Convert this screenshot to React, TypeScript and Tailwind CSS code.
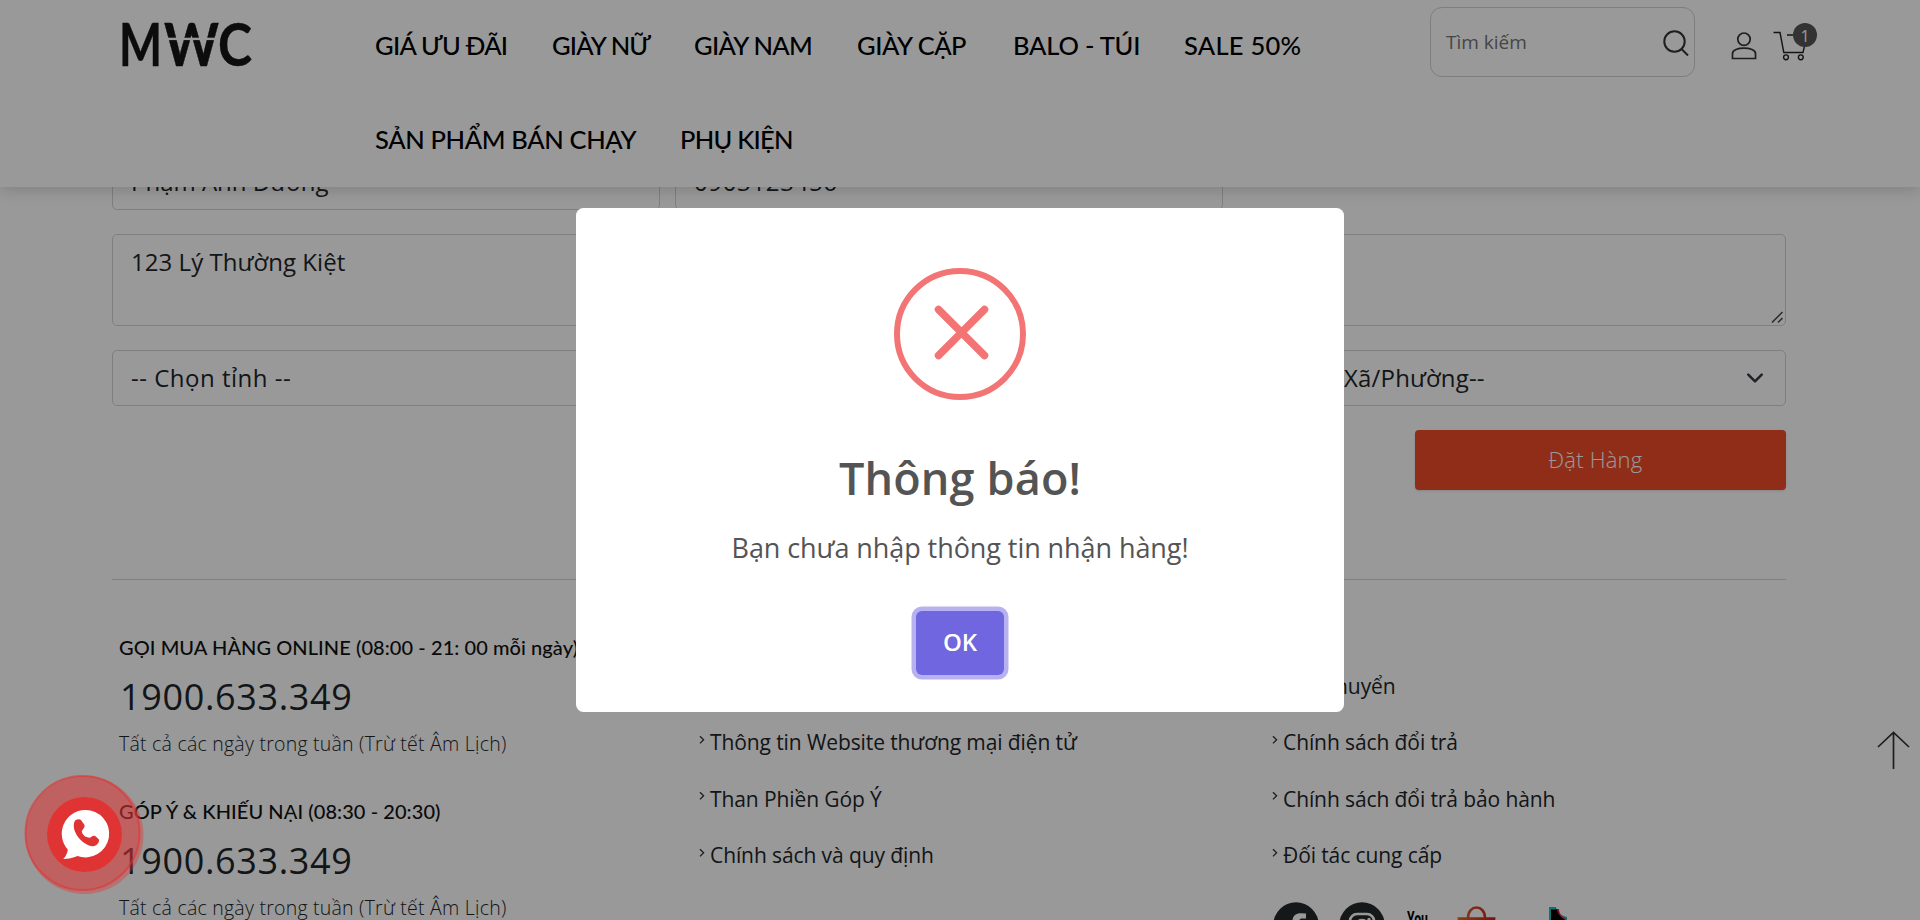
import { ReactNode } from "react";

const lato = "font-['Lato','Open_Sans',sans-serif]";

function NavItem({ children, width, track = "tracking-[-0.7px]" }: { children: ReactNode; width: string; track?: string }) {
  return (
    <a className={`block h-[94px] leading-[90px] whitespace-nowrap text-[25.5px] font-medium text-black ${lato} ${width} ${track}`}>
      {children}
    </a>
  );
}

function Header() {
  return (
    <header className="relative z-10 flex h-[187px] shrink-0 bg-white shadow-[0_4px_14px_rgba(0,0,0,0.15)]">
      <Logo />
      <nav className="ml-[123px] w-[961px]">
        <div className="flex">
          <NavItem width="w-[177px]">GIÁ ƯU ĐÃI</NavItem>
          <NavItem width="w-[142px]" track="tracking-[-0.85px]">GIÀY NỮ</NavItem>
          <NavItem width="w-[163px]">GIÀY NAM</NavItem>
          <NavItem width="w-[156px]" track="tracking-[-0.45px]">GIÀY CẶP</NavItem>
          <NavItem width="w-[171px]" track="tracking-[-0.2px]">BALO - TÚI</NavItem>
          <NavItem width="w-[140px]" track="tracking-[0.25px]">SALE 50%</NavItem>
        </div>
        <div className="flex">
          <NavItem width="w-[305px]" track="tracking-[-0.35px]">SẢN PHẨM BÁN CHẠY</NavItem>
          <NavItem width="w-[140px]" track="tracking-[-0.75px]">PHỤ KIỆN</NavItem>
        </div>
      </nav>
      <div className="ml-[94px] mt-[7px] flex h-[70px] w-[265px] items-center justify-between rounded-xl border border-[#d2d2d2] pl-[15px] pr-[5px]">
        <span className="text-[19px] text-[#757575]">Tìm kiếm</span>
        <svg width="26" height="27" viewBox="0 0 26 27" fill="none" stroke="#333" strokeWidth="2" className="mt-0.5">
          <circle cx="11.5" cy="11.5" r="10.2" />
          <path d="M18.5 19 L25 25.5" />
        </svg>
      </div>
      <svg className="ml-[36px] mt-[32px]" width="26" height="28" viewBox="0 0 26 28" fill="none" stroke="#333" strokeWidth="1.7">
        <circle cx="13" cy="7.2" r="6.2" />
        <path d="M1.5 26.5 V21.5 C1.5 18 7 16.2 13 16.2 S24.5 18 24.5 21.5 V26.5 Z" />
      </svg>
      <div className="relative ml-4 mt-[30px] h-8 w-9">
        <svg width="36" height="32" viewBox="0 0 36 32" fill="none" stroke="#222" strokeWidth="1.4">
          <path d="M0.5 2.5 H7 L10.8 22.5 H30 L34 5 H14" />
          <circle cx="13" cy="27.3" r="2.4" />
          <circle cx="27.8" cy="27.3" r="2.4" />
        </svg>
        <span className="absolute -top-[7px] left-[20px] flex size-6 items-center justify-center rounded-full bg-[#555] pt-px text-[16px] font-medium text-white">1</span>
      </div>
    </header>
  );
}

function Logo() {
  return (
    <div className="ml-[120px] mt-[14px] h-[60px] w-[132px]">
      <svg className="overflow-visible" width="132" height="60" viewBox="0 0 132 60" role="img" fontFamily="Lato, 'Open Sans', sans-serif" fontWeight="700" fontSize="59" fill="#161416" stroke="#161416" strokeWidth="0.4">
        <text x="-1" y="51.5" textLength="43" lengthAdjust="spacingAndGlyphs">M</text>
        <text x="44" y="51.5" textLength="55" lengthAdjust="spacingAndGlyphs">W</text>
        <text x="98" y="51.5" textLength="34" lengthAdjust="spacingAndGlyphs">C</text>
        <rect x="44" y="23.7" width="54" height="2.4" fill="#fff" stroke="none" />
      </svg>
    </div>
  );
}

const field = "rounded-[5px] border border-[#d3d4d8] px-[18px] text-[24px] text-[#212529]";

function Chevron() {
  return (
    <svg width="18" height="18" viewBox="0 0 16 16" fill="none" stroke="#343a40" strokeWidth="2.2" strokeLinecap="round" strokeLinejoin="round">
      <path d="m2 5 6 6 6-6" />
    </svg>
  );
}

function OrderForm() {
  return (
    <section className="-mt-[33px] ml-[112px] flex w-[1674px] flex-col">
      <div className="flex gap-[15px]">
        <div className={`h-14 w-[548px] leading-[54px] ${field}`}>Phạm Ánh Dương</div>
        <div className={`h-14 w-[548px] leading-[54px] tracking-[0.65px] ${field}`}>0903123456</div>
      </div>
      <div className={`relative mt-6 h-[92px] pt-[9px] leading-9 tracking-[0.05px] ${field}`}>
        123 Lý Thường Kiệt
        <svg className="absolute bottom-0.5 right-0.5" width="12" height="12" viewBox="0 0 12 12" stroke="#444" strokeWidth="1.5">
          <path d="M1 11.5 L11.5 1 M7 11.5 L11.5 7" />
        </svg>
      </div>
      <div className="mt-6 flex gap-[15px]">
        <div className={`flex h-14 w-[548px] items-center justify-between tracking-[0.5px] ${field}`}>
          -- Chọn tỉnh -- <Chevron />
        </div>
        <div className={`flex h-14 w-[548px] items-center justify-between ${field}`}>
          --Chọn Quận/Huyện-- <Chevron />
        </div>
        <div className={`flex h-14 w-[548px] items-center justify-between ${field}`}>
          <span className="-ml-px tracking-[0.15px] whitespace-nowrap">-- Chọn Xã/Phường--</span>
          <div className="pr-[3px]"><Chevron /></div>
        </div>
      </div>
      <button className="mt-6 h-[60px] w-[371px] self-end rounded-[4px] bg-[#ee4b2b] pb-0.5 pr-2.5 text-[22px] font-light text-white shadow-sm tracking-[0.2px]">
        Đặt Hàng
      </button>
    </section>
  );
}

function Contact({ title }: { title: string }) {
  return (
    <div className="h-[164px] whitespace-nowrap">
      <h4 className={`h-[34px] text-[20px] font-medium leading-[32px] tracking-[0.07px] text-[#111] ${lato}`}>{title}</h4>
      <p className="mt-[6px] h-[50px] pl-px text-[36px] leading-[52px] text-[#212529] tracking-[0.65px]">1900.633.349</p>
      <p className="mt-[8px] h-[30px] text-[19.5px] font-light leading-[30px] text-[#212529] tracking-[0.23px]">
        Tất cả các ngày trong tuần (Trừ tết Âm Lịch)
      </p>
    </div>
  );
}

function Links({ items, className }: { items: string[]; className: string }) {
  return (
    <ul className={className}>
      {items.map((t) => (
        <li key={t} className="flex h-[56.5px] items-center gap-[5px] whitespace-nowrap text-[21px] tracking-[-0.1px] text-[#212529]">
          <svg className="mb-1.5" width="6" height="10" viewBox="0 0 6 10" fill="none" stroke="#333" strokeWidth="1.3">
            <path d="m1 1.2 3.6 3.6 L1 8.4" />
          </svg>
          {t}
        </li>
      ))}
    </ul>
  );
}

function Social() {
  return (
    <div className="ml-px flex h-[46px] items-start">
      <svg className="mr-[20px]" width="46" height="46" viewBox="0 0 46 46">
        <circle cx="23" cy="23" r="22.7" fill="#22292b" />
        <path d="M33 11.5 V16.5 H29.5 C26.5 16.5 26 18 26 20 V23.5 H33 L32 30 H26 V46 H19.5 V30 H14 V23.5 H19.5 V19 C19.5 14 22.5 11.2 28 11.2 Z" fill="#fff" />
      </svg>
      <svg className="mr-[22px]" width="46" height="46" viewBox="0 0 46 46">
        <circle cx="23" cy="23" r="22.7" fill="#22292b" />
        <rect x="11" y="12" width="24" height="24" rx="7" fill="none" stroke="#fff" strokeWidth="2.6" />
        <circle cx="23" cy="24" r="6" fill="none" stroke="#fff" strokeWidth="2.6" />
        <circle cx="30" cy="17.5" r="1.7" fill="#fff" />
      </svg>
      <svg className="mr-[28px]" width="22" height="30" viewBox="0 0 22 30">
        <text x="0" y="23.5" fontFamily="Roboto, sans-serif" fontWeight="700" fontSize="20" textLength="21" lengthAdjust="spacingAndGlyphs" fill="#000">You</text>
      </svg>
      <svg className="mr-[53px]" width="39" height="46" viewBox="0 0 39 46">
        <defs>
          <linearGradient id="bag" gradientUnits="userSpaceOnUse" x1="0" x2="39" y1="0" y2="0">
            <stop offset="0" stopColor="#de6a2b" />
            <stop offset="1" stopColor="#c2201f" />
          </linearGradient>
        </defs>
        <path d="M11 16 C11 2 28 2 28 16" fill="none" stroke="url(#bag)" strokeWidth="2.6" />
        <path d="M0.5 15.2 H38.5 L36 44 H3 Z" fill="url(#bag)" />
      </svg>
      <svg width="22" height="46" viewBox="0 0 22 46">
        <path d="M0 5 H7 C8 10 11 13.5 18 15 V40 H0 Z" fill="#13c2bd" />
        <path d="M6 7 H10 C10 11 13 15.5 18 16.5 L12 17 Z" fill="#e8244f" />
        <path d="M2 7.5 H8 C9 12 12 16 16 17.5 V40 H2 Z" fill="#000" />
      </svg>
    </div>
  );
}

function Footer() {
  return (
    <footer className="ml-[112px] mt-[89px] flex h-[340px] w-[1674px] border-t border-[#d4d4d6] pl-[7px]">
      <div className="w-[580px] pt-[51px]">
        <Contact title="GỌI MUA HÀNG ONLINE (08:00 - 21: 00 mỗi ngày)" />
        <Contact title="GÓP Ý & KHIẾU NẠI (08:30 - 20:30)" />
      </div>
      <Links className="w-[573px] pt-[78px]" items={["Giới thiệu MWC", "Thông tin Website thương mại điện tử", "Than Phiền Góp Ý", "Chính sách và quy định"]} />
      <div className="pt-[78px]">
        <Links className="h-[244px]" items={["Vận chuyển", "Chính sách đổi trả", "Chính sách đổi trả bảo hành", "Đối tác cung cấp"]} />
        <Social />
      </div>
    </footer>
  );
}

function Dialog() {
  return (
    <div className="absolute inset-0 z-20 flex items-center justify-center bg-black/40">
      <div className="flex h-[504px] w-[768px] flex-col items-center rounded-[7.5px] bg-white">
        <svg className="mt-[60px] shrink-0" width="132" height="132" viewBox="0 0 132 132" fill="none" stroke="#f27474">
          <circle cx="66" cy="66" r="63" strokeWidth="6" />
          <path d="M44.5 41.5 L90.5 87.5 M90.5 41.5 L44.5 87.5" strokeWidth="7.5" strokeLinecap="round" />
        </svg>
        <h2 className="mt-[46px] h-[64px] text-[45px] font-semibold leading-[64px] tracking-[0.15px] text-[#545454]">Thông báo!</h2>
        <p className="mt-[18px] h-[40px] whitespace-nowrap text-[27px] leading-[40px] tracking-[-0.07px] text-[#545454]">Bạn chưa nhập thông tin nhận hàng!</p>
        <button className="mt-[43px] h-16 w-[88px] rounded-[6px] bg-[#7066e0] pb-0.5 text-[24px] font-semibold text-white shadow-[0_0_0_4.5px_rgba(112,102,224,0.5)]">
          OK
        </button>
      </div>
    </div>
  );
}

function PhoneButton() {
  return (
    <svg className="absolute left-[24px] top-[774px] z-30" width="122" height="122" viewBox="0 0 122 122">
      <circle cx="60.5" cy="61" r="59" fill="#e03434" fillOpacity="0.4" />
      <circle cx="58.5" cy="59" r="57" fill="#e03434" fillOpacity="0.25" stroke="#e03434" strokeOpacity="0.6" strokeWidth="2" />
      <circle cx="60.5" cy="60.5" r="37.5" fill="#e03434" />
      <path d="M61 36 A23.7 23.7 0 1 1 53.5 82 C49 84 44 85 39.3 85 C42.5 81.5 43.5 78.5 43.8 75.5 A23.7 23.7 0 0 1 61 36 Z" fill="#fff" />
      <path d="M51 46.5 C53 45.5 55.5 44.8 57 46 L60.5 51 C61.3 53 59 55 57.8 57 C58 60.5 61 63.5 66 63.7 C68 62 70 61.2 71.5 62.2 L75 65.5 C75.5 68 73 72.5 68.5 72.3 C60 71.5 48 60 50 49 Z" fill="#e03434" />
    </svg>
  );
}

export default function App() {
  return (
    <div className="relative flex h-[920px] w-[1920px] flex-col overflow-hidden bg-white font-['Open_Sans','Noto_Sans',sans-serif]">
      <Header />
      <OrderForm />
      <Footer />
      <svg className="absolute left-[1877px] top-[731px]" width="33" height="39" viewBox="0 0 33 39" fill="none" stroke="#333" strokeWidth="1.7">
        <path d="M16.5 38 V1.5 M1 16 L16.5 1.5 L32 16" />
      </svg>
      <Dialog />
      <PhoneButton />
    </div>
  );
}
